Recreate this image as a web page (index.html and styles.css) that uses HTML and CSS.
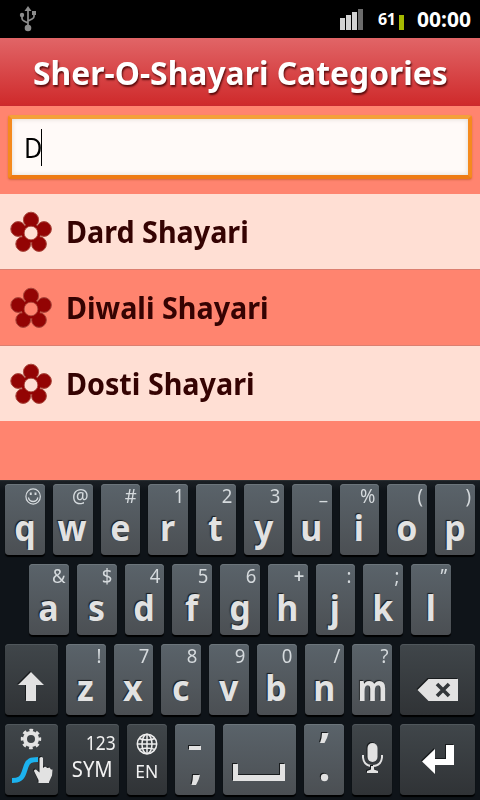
FILE: index.html
```html
<!DOCTYPE html>
<html lang="en">

<head>
    <meta charset="UTF-8">
    <meta name="viewport" content="width=device-width, initial-scale=1.0">
    <title>Sher-O-Shayari Categories</title>
    <link rel="stylesheet" href="styles.css">
</head>

<body>
    <svg width="0" height="0" class="defs">
        <symbol id="flower" viewBox="0 0 42 42">
            <g fill="#930404" stroke="#a8473c" stroke-width="1">
                <circle cx="21" cy="8.8" r="7.6" />
                <circle cx="34" cy="18" r="7.4" />
                <circle cx="29" cy="33" r="7.4" />
                <circle cx="13.2" cy="33" r="7.4" />
                <circle cx="8.2" cy="18" r="7.4" />
            </g>
            <path fill="none" stroke="#930404" stroke-width="3" d="M21 14a8 8 0 1 0 .1 0z" />
            <circle class="flower-center" cx="21" cy="22" r="6.8" stroke="#a8473c" stroke-width=".8" />
        </symbol>
    </svg>

    <div class="status-bar">
        <svg class="usb" width="18" height="26" viewBox="0 0 18 26" fill="#8c8c8c">
            <path d="M9 0l3.5 5h-7z" />
            <circle cx="9" cy="22" r="3.3" />
            <circle cx="3" cy="9" r="2.2" />
            <path d="M13 5h4v4h-4z" />
            <path fill="none" stroke="#8c8c8c" stroke-width="1.7" d="M9 4v18M3 9v3.5q0 1.5 2 2.5l4 2M15 8v2.500q0 1.500-2 2.500l-4 2" />
        </svg>
        <svg class="signal" width="24" height="22" viewBox="0 0 24 22">
            <path fill="#d2d2d2" d="M0 9h5v12H0zM6 6h5v15H6zM12 3h5v18h-5z" />
            <path fill="#6b6b6b" d="M18 0h5v21h-5z" />
        </svg>
        <span class="battery-text">61</span>
        <span class="battery"></span>
        <span class="clock">00:00</span>
    </div>

    <h1 class="header"><span>Sher-O-Shayari Categories</span></h1>

    <div class="search">
        <div class="search-box"><span>D</span><i class="caret"></i></div>
    </div>

    <ul class="category-list">
        <li class="light"><svg class="flower"><use href="#flower" /></svg><span>Dard Shayari</span></li>
        <li><svg class="flower"><use href="#flower" /></svg><span>Diwali Shayari</span></li>
        <li class="light"><svg class="flower"><use href="#flower" /></svg><span>Dosti Shayari</span></li>
    </ul>

    <div class="keyboard">
        <div class="row">
            <div class="key">
                <small><svg class="smiley" width="17" height="17" viewBox="0 0 17 17" fill="none" stroke="#d5dadd" stroke-width="1.3">
                    <circle cx="8.500" cy="8.500" r="7.600" />
                    <path d="M3.500 9.500q1 4 5 4t5-4" />
                    <path stroke-width="2" d="M6 4.500v2.500M11 4.500v2.500" />
                </svg></small><b>q</b>
            </div>
            <div class="key"><small>@</small><b>w</b></div>
            <div class="key"><small>#</small><b>e</b></div>
            <div class="key"><small>1</small><b>r</b></div>
            <div class="key"><small>2</small><b>t</b></div>
            <div class="key"><small>3</small><b>y</b></div>
            <div class="key"><small class="underscore">_</small><b>u</b></div>
            <div class="key"><small>%</small><b>i</b></div>
            <div class="key"><small>(</small><b>o</b></div>
            <div class="key"><small>)</small><b>p</b></div>
        </div>
        <div class="row middle">
            <div class="key"><small>&amp;</small><b>a</b></div>
            <div class="key"><small>$</small><b>s</b></div>
            <div class="key"><small>4</small><b>d</b></div>
            <div class="key"><small>5</small><b>f</b></div>
            <div class="key"><small>6</small><b>g</b></div>
            <div class="key"><small class="plus">+</small><b>h</b></div>
            <div class="key"><small>:</small><b>j</b></div>
            <div class="key"><small>;</small><b>k</b></div>
            <div class="key"><small>”</small><b>l</b></div>
        </div>
        <div class="row">
            <div class="key dark w53">
                <svg width="53" height="71" viewBox="0 0 53 71">
                    <path class="icon" d="M26 28l13 13h-8v16h-10V41h-8z" />
                </svg>
            </div>
            <div class="key"><small>!</small><b>z</b></div>
            <div class="key"><small>7</small><b>x</b></div>
            <div class="key"><small>8</small><b>c</b></div>
            <div class="key"><small>9</small><b>v</b></div>
            <div class="key"><small>0</small><b>b</b></div>
            <div class="key"><small>/</small><b>n</b></div>
            <div class="key"><small>?</small><b class="wide">m</b></div>
            <div class="key dark w75">
                <svg width="75" height="71" viewBox="0 0 75 71">
                    <path class="icon" d="M17.500 46l11-11H58v22H28.500z" />
                    <path fill="none" stroke="#34383b" stroke-width="3.600" d="M37 40l12 12M49 40l-12 12" />
                </svg>
            </div>
        </div>
        <div class="row">
            <div class="key dark w53">
                <svg width="53" height="71" viewBox="0 0 53 71">
                    <circle cx="26" cy="15" r="6" fill="none" stroke="#e2e2e2" stroke-width="4" />
                    <circle cx="26" cy="15" r="8.700" fill="none" stroke="#e2e2e2" stroke-width="3" stroke-dasharray="3.600 3.233" stroke-dashoffset="1.800" />
                    <path fill="none" stroke="#1cb2ee" stroke-width="5" d="M7 56.500c7 0 10-2 12-8l2-6c2-6 5-7 12-7" />
                    <path class="icon" d="M34.500 34q2-2 3.500 0v10l2-1.500 2.500 1.500 2-.5 1.500 2h1.500l-.5 6-3 6.500v1h-10.500v-3l-4.500-9q0-2 2-1.500l3.500 3z" />
                </svg>
            </div>
            <div class="key dark w53 sym"><span class="num">123</span><span>SYM</span></div>
            <div class="key dark w40 lang">
                <svg width="22" height="22" viewBox="0 0 22 22" fill="none" stroke="#ededed" stroke-width="1.500">
                    <circle cx="11" cy="11" r="9.700" />
                    <ellipse cx="11" cy="11" rx="5" ry="9.700" />
                    <path d="M11 1v20M1 11h20M3 5.500q8 3 16 0M3 16.500q8-3 16 0" />
                </svg>
                <span>EN</span>
            </div>
            <div class="key w40">
                <svg width="40" height="71" viewBox="0 0 40 71">
                    <path class="icon" d="M14 22h12v4H14zM18 51h7q-1 5-4 10h-4.500q1.500-5 1.500-10z" />
                </svg>
            </div>
            <div class="key w73">
                <svg width="73" height="71" viewBox="0 0 73 71">
                    <path class="icon" d="M10 40h5v11h42V40h5v17H10z" />
                </svg>
            </div>
            <div class="key w40">
                <svg width="40" height="71" viewBox="0 0 40 71">
                    <path class="icon" d="M18 9h6.500q-1 5-4 10H16q2-5 2-10z" />
                    <circle class="icon" cx="20.500" cy="53.500" r="3.700" />
                </svg>
            </div>
            <div class="key dark w40">
                <svg width="40" height="71" viewBox="0 0 40 71">
                    <rect class="icon" x="15.500" y="19" width="10" height="19" rx="5" />
                    <path fill="none" stroke="#e2e2e2" stroke-width="2" d="M11 31v2.500q1 8.500 9.500 8.500t9.500-8.500V31" />
                    <path class="icon" d="M19 42h3v3.500l4 1.500v2H15v-2l4-1.500z" />
                </svg>
            </div>
            <div class="key dark w75">
                <svg width="75" height="71" viewBox="0 0 75 71">
                    <path class="icon white" d="M22 37.500L35 25v10h11V21h8v20H35v9z" />
                </svg>
            </div>
        </div>
    </div>
</body>

</html>
```

FILE: styles.css
```css
* {
    box-sizing: border-box;
}

body {
    margin: 0;
    width: 480px;
    height: 800px;
    overflow: hidden;
    display: flex;
    flex-direction: column;
    background-color: #ff846f;
    font-family: 'Noto Sans', sans-serif;
}

.defs {
    position: absolute;
}

/* Status bar */
.status-bar {
    height: 38px;
    background-color: #000;
    color: #fff;
    display: flex;
    align-items: flex-start;
    font-weight: bold;
}

.usb {
    margin: 6px 0 0 19px;
}

.signal {
    margin: 9px 14px 0 auto;
}

.battery-text {
    width: 18px;
    font-size: 16px;
    line-height: 38px;
    letter-spacing: -0.5px;
}

.battery {
    width: 5px;
    height: 15px;
    margin: 15px 13px 0 3px;
    background-color: #a5b900;
}

.clock {
    width: 63px;
    font-size: 21px;
    line-height: 38px;
}

/* Header */
.header {
    margin: 0;
    height: 68px;
    background: linear-gradient(#e16567, #cf2a2b);
    border-bottom: 1px solid #c92a30;
    color: #fff;
    font-size: 32px;
    line-height: 70px;
    text-align: center;
    white-space: nowrap;
    text-shadow: 1px 2px 2px rgba(60, 0, 0, 0.8);
}

.header span {
    display: inline-block;
    transform: scaleX(0.995);
}

/* Search field */
.search {
    height: 88px;
    padding: 9px 8px 0;
}

.search-box {
    height: 64px;
    padding: 10px 0 0 12px;
    border: 4px solid #f68a1c;
    border-color: #f4a03a #f58a1e #ee7a14 #f58a1e;
    border-radius: 3px;
    background-color: #fffaf8;
    box-shadow: inset 0 0 5px #ddd8d0, 0 1px 2px rgba(150, 60, 0, 0.4);
    display: flex;
    font-size: 28px;
    line-height: 36px;
    color: #000;
}

.search-box span {
    display: block;
    width: 17px;
    transform: scaleX(0.9);
    transform-origin: left;
}

.caret {
    width: 1px;
    height: 37px;
    background-color: #000;
}

/* Categories */
.category-list {
    list-style-type: none;
    margin: 0;
    padding: 0;
    height: 286px;
}

.category-list li {
    height: 76px;
    padding-left: 10px;
    border-bottom: 1px solid #dc7f70;
    display: flex;
    color: #350302;
    font-size: 30px;
    font-weight: bold;
    line-height: 76px;
    white-space: nowrap;
    --row-color: #ff846f;
}

.category-list li.light {
    background-color: #ffdfd4;
    --row-color: #ffdfd4;
}

.category-list li:last-child {
    border-color: #ff846f;
}

.flower {
    width: 42px;
    height: 42px;
    margin: 17px 14px 0 0;
}

.flower-center {
    fill: var(--row-color);
}

.category-list span {
    transform: scaleX(0.957);
    transform-origin: left;
}

/* Keyboard */
.keyboard {
    height: 320px;
    padding: 3px 5px 0;
    border-top: 1px solid #2a2e31;
    background: linear-gradient(#1b2025, #0f1419 10px);
    display: flex;
    flex-direction: column;
    gap: 9px;
}

.row {
    display: flex;
    gap: 8px;
}

.row.middle {
    padding: 0 24px;
}

.key {
    flex: 1 1 0;
    min-width: 0;
    height: 71px;
    border-radius: 4px;
    background: linear-gradient(#5a636a, #4b4f53);
    box-shadow: inset 0 1px 0 #6c757b, 0 2px 1px #000;
    color: #e2e2e2;
    display: flex;
    flex-direction: column;
    align-items: center;
}

.key.dark {
    background: linear-gradient(#40464a, #303336);
    box-shadow: inset 0 1px 0 #50575b, 0 2px 1px #000;
}

.key.w40 {
    flex: 0 0 40px;
}

.key.w53 {
    flex: 0 0 53px;
}

.key.w73 {
    flex: 0 0 73px;
}

.key.w75 {
    flex: 0 0 75px;
}

.key small {
    align-self: flex-end;
    height: 22px;
    padding-right: 4px;
    font-size: 19.5px;
    line-height: 24px;
    color: #d5dadd;
    transform: scaleX(0.95);
    transform-origin: right;
}

.key small.underscore {
    line-height: 16px;
}

.key small.underscore,
.key small.plus {
    font-weight: 600;
}

.smiley {
    display: block;
    margin-top: 4px;
}

.key b {
    font-size: 36px;
    line-height: 44px;
    text-shadow: -1px -1px 1px #181b1d;
    transform: translateX(-0.5px) scaleX(0.94);
}

.key b.wide {
    transform: scaleX(0.84);
}

.icon {
    fill: #e2e2e2;
    filter: drop-shadow(-1px -1px 0 #181b1d);
}

.icon.white {
    fill: #fff;
}

.sym {
    padding-top: 7px;
    color: #f2f2f2;
    font-size: 22px;
    line-height: 26px;
}

.sym span {
    transform: scaleX(0.92);
}

.sym .num {
    align-self: flex-end;
    padding-right: 3px;
    font-size: 19px;
    line-height: 24px;
    transform: scaleX(0.92);
    transform-origin: right;
}

.lang {
    padding-top: 9px;
    color: #f2f2f2;
    font-size: 18px;
    line-height: 32px;
}

.lang span {
    transform: scaleX(0.97);
}
```
